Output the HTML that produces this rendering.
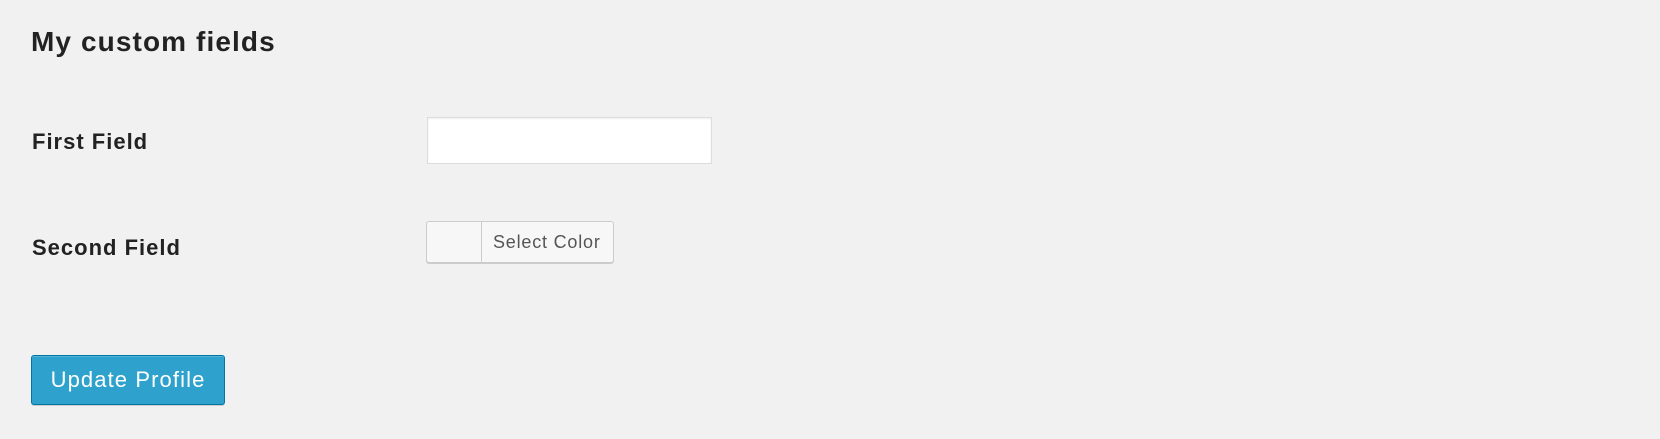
<!DOCTYPE html>
<html><head><style>
body{margin:0;width:1660px;height:439px;background:#f1f1f1;font-family:"Liberation Sans",sans-serif;color:#222;position:relative;overflow:hidden}
.a{position:absolute;white-space:nowrap}
h2{position:absolute;left:31px;top:22px;margin:0;font-size:28px;font-weight:bold;line-height:40px;letter-spacing:1.1px}
.lbl{font-size:22px;font-weight:bold;line-height:30px;letter-spacing:1px}
.inp{left:427px;top:117px;width:283px;height:45px;background:#fff;border:1px solid #ddd;box-shadow:inset 0 1px 2px rgba(0,0,0,.07)}
.cb{left:426px;top:221px;width:186px;height:40px;border:1px solid #ccc;border-radius:3px;background:#f7f7f7;box-shadow:0 1px 0 #ccc}
.cb .sw{position:absolute;left:54px;top:0;width:1px;height:40px;background:#ccc}
.cb .t{position:absolute;left:66px;top:8px;font-size:18px;color:#555;line-height:24px;letter-spacing:0.8px}
.btn{left:31px;top:355px;width:192px;height:48px;background:#2ea2cc;border:1px solid #0074a2;border-radius:3px;box-shadow:inset 0 1px 0 rgba(120,200,230,.5),0 1px 0 rgba(0,0,0,.15);color:#fff;font-size:22px;line-height:48px;text-align:center;letter-spacing:1.1px}
</style></head><body>
<h2>My custom fields</h2>
<div class="a lbl" style="left:32px;top:127px">First Field</div>
<div class="a inp"></div>
<div class="a lbl" style="left:32px;top:233px">Second Field</div>
<div class="a cb"><div class="sw"></div><div class="t">Select Color</div></div>
<div class="a btn">Update Profile</div>
</body></html>
